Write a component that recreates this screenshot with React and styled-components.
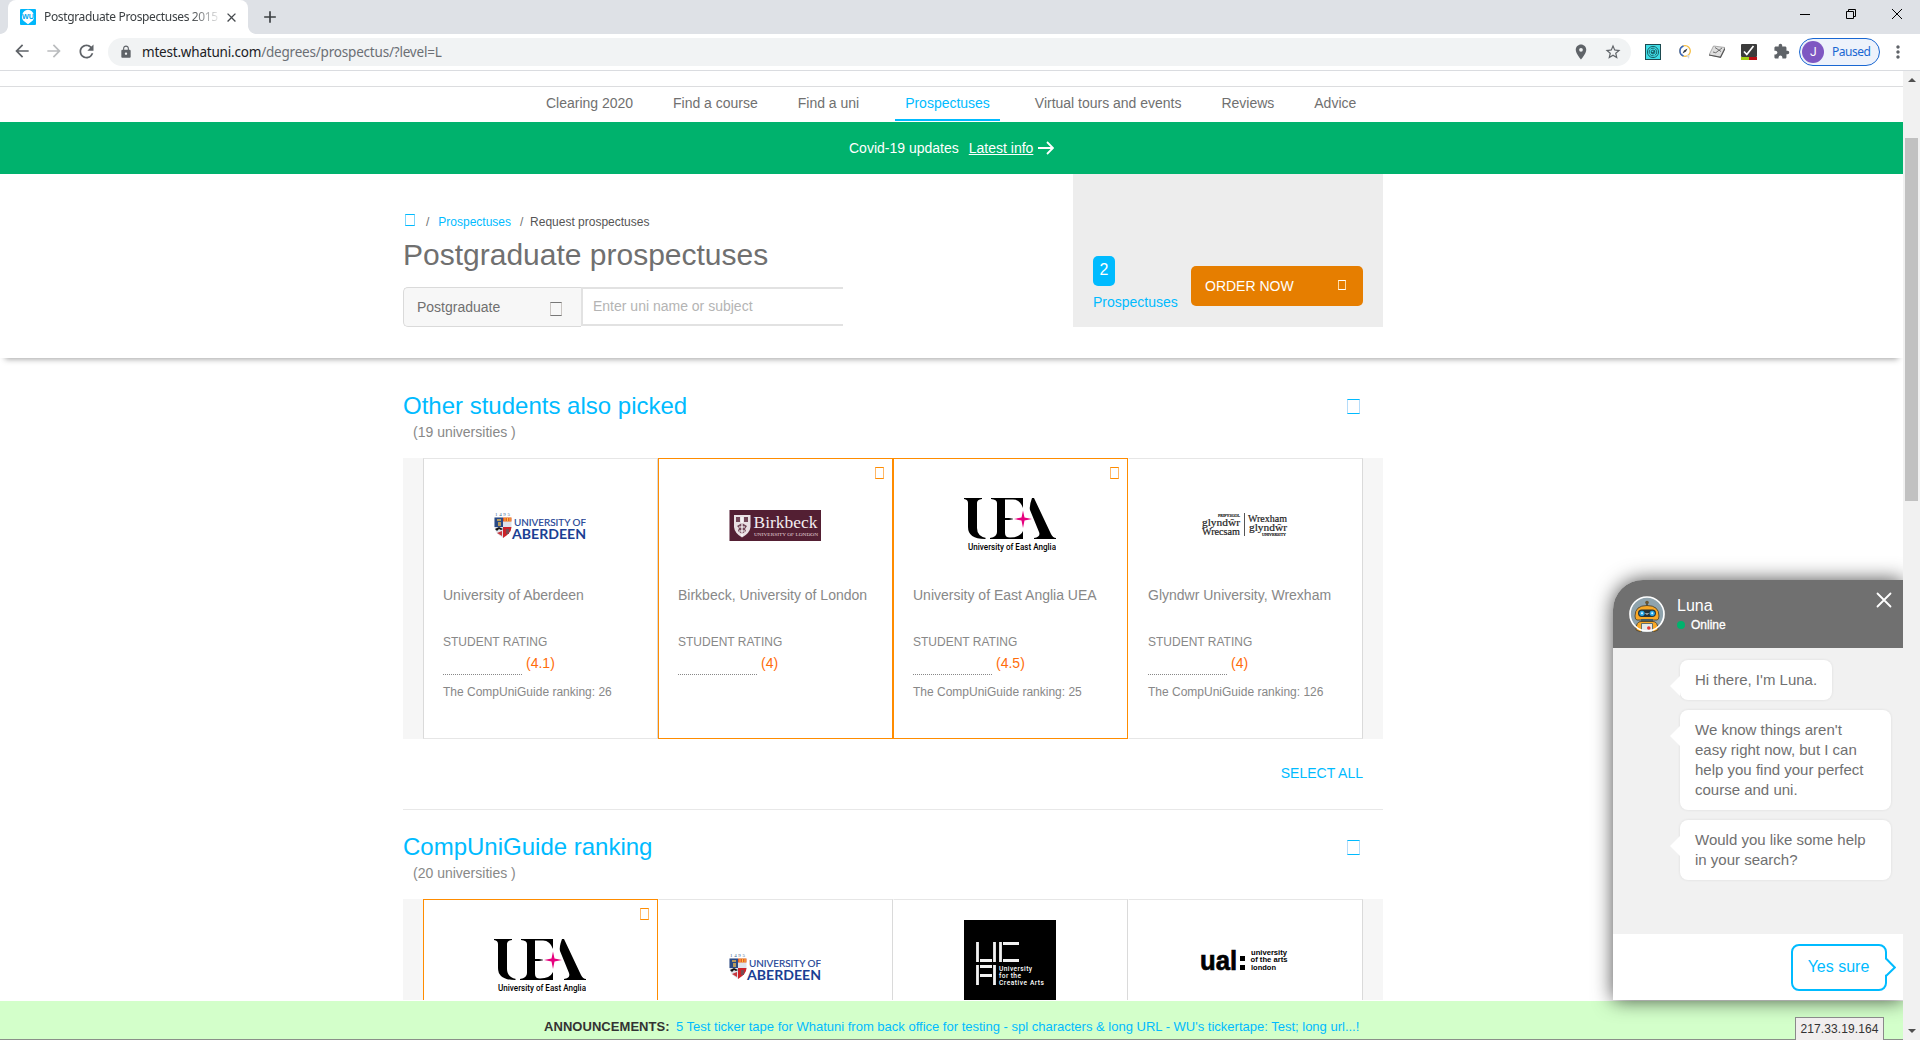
import React from "react";
import styled, { createGlobalStyle } from "styled-components";
import {
  MdArrowBack,
  MdArrowForward,
  MdRefresh,
  MdLock,
  MdPlace,
  MdStarBorder,
  MdExtension,
  MdMoreVert,
  MdClose,
  MdAdd,
} from "react-icons/md";

const blue = "#00bbff";
const orange = "#ff8c00";

const GlobalStyle = createGlobalStyle`
  * { box-sizing: border-box; }
  body {
    margin: 0;
    background: #fff;
    font-family: "Liberation Sans", Arial, sans-serif;
    font-size: 14px;
    line-height: 20px;
    color: #707070;
  }
  svg { display: block; flex: none; }
  h1, h2, p { margin: 0; font-weight: normal; }
`;

const Window = styled.div`
  width: 1920px;
  height: 1040px;
  display: flex;
  flex-direction: column;
  overflow: hidden;
`;

/* ---------- browser chrome ---------- */

const TabStrip = styled.div`
  height: 34px;
  flex: none;
  background: #dee1e6;
  display: flex;
  align-items: flex-start;
  justify-content: space-between;
`;

const TabGroup = styled.div`
  display: flex;
  align-items: flex-start;
`;

const TabCurve = styled.div`
  width: 8px;
  height: 8px;
  margin-top: 26px;
  background: radial-gradient(
    circle at ${(p) => (p.$side === "left" ? "0 0" : "100% 0")},
    #dee1e6 7.5px,
    #fff 8.2px
  );
`;

const Tab = styled.div`
  height: 34px;
  width: 240px;
  padding: 0 9px 0 12px;
  background: #fff;
  border-radius: 8px 8px 0 0;
  display: flex;
  align-items: center;
  color: #45494d;
`;

const TabTitle = styled.span`
  font-family: "Noto Sans", sans-serif;
  font-size: 12px;
  letter-spacing: -0.36px;
  line-height: 16px;
  width: 174px;
  margin: 0 6px 0 8px;
  white-space: nowrap;
  color: #3c4043;
  mask-image: linear-gradient(90deg, #000 146px, transparent 178px);
`;

const NewTab = styled.div`
  margin: 7px 0 0 4px;
  color: #3c4043;
`;

const WindowControls = styled.div`
  display: flex;
  gap: 36px;
  padding: 9px 18px 0 0;
`;

const Toolbar = styled.div`
  height: 37px;
  flex: none;
  background: #fff;
  border-bottom: 1px solid #dadce0;
  display: flex;
  align-items: center;
  padding: 0 12px 1px;
  color: #5f6368;
`;

const NavIcons = styled.div`
  display: flex;
  gap: 12px;
  width: 96px;
  color: #5f6368;
  svg:nth-child(2) { color: #babcbe; }
`;

const Omnibox = styled.div`
  width: 1523px;
  height: 28px;
  border-radius: 14px;
  background: #f1f3f4;
  display: flex;
  align-items: center;
  padding: 0 9px 0 11px;
`;

const Url = styled.span`
  font-family: "Noto Sans", sans-serif;
  font-size: 13.5px;
  letter-spacing: -0.2px;
  flex: 1;
  margin-left: 9px;
  color: #6b6f74;
  white-space: nowrap;
  b { font-weight: normal; color: #202124; }
`;

const OmniActions = styled.div`
  display: flex;
  gap: 14px;
`;

const Extensions = styled.div`
  display: flex;
  align-items: center;
  margin-left: 14px;
  gap: 16px;
`;

const ProfilePill = styled.div`
  margin-left: 9px;
  width: 81px;
  height: 28px;
  border: 1px solid #1967d2;
  border-radius: 14px;
  background: #edf2fb;
  color: #1967d2;
  display: flex;
  align-items: center;
  padding-left: 2px;
  font-family: "Noto Sans", sans-serif;
  font-size: 12px;
  letter-spacing: -0.5px;
`;

const Avatar = styled.span`
  width: 22px;
  height: 22px;
  border-radius: 50%;
  background: #7e57c2;
  color: #fff;
  text-align: center;
  line-height: 22px;
  margin-right: 8px;
  font-family: Roboto, sans-serif;
`;

const MenuDots = styled.div`
  margin-left: 8px;
`;

/* ---------- page frame ---------- */

const Body = styled.div`
  flex: 1;
  display: flex;
  min-height: 0;
`;

const Page = styled.div`
  flex: 1;
  position: relative;
  display: flex;
  flex-direction: column;
  overflow: hidden;
`;

const Scrollable = styled.div`
  height: 929px;
  flex: none;
  overflow: hidden;
`;

const Scrollbar = styled.div`
  width: 17px;
  background: #f1f1f1;
  display: flex;
  flex-direction: column;
  align-items: center;
  padding: 7px 0 7px;
`;

const ScrollArrow = styled.div`
  border: 4px solid transparent;
  border-top: ${(p) => (p.$down ? "4px solid #505050" : "0")};
  border-bottom: ${(p) => (p.$down ? "0" : "4px solid #505050")};
`;

const Thumb = styled.div`
  width: 13px;
  height: 363px;
  margin: 56px 0 auto;
  background: #c1c1c1;
`;

const MainNav = styled.nav`
  margin-top: 15px;
  height: 36px;
  border-top: 1px solid #dcdddf;
  display: flex;
  padding-left: 526px;
`;

const NavLink = styled.a`
  height: 34px;
  padding: 6px ${(p) => (p.$active ? 10 : 20)}px 0;
  margin: 0 ${(p) => (p.$active ? 15 : 0)}px 0 ${(p) => (p.$active ? 16 : 0)}px;
  border-bottom: 2px solid ${(p) => (p.$active ? blue : "transparent")};
  color: ${(p) => (p.$active ? blue : "#707070")};
  letter-spacing: -0.01px;
  white-space: nowrap;
`;

const Banner = styled.div`
  height: 52px;
  background: #00b26d;
  color: #fff;
  display: flex;
  align-items: center;
  padding-left: 849px;
  a { text-decoration: underline; margin: 0 5px 0 10px; }
`;

const Hero = styled.header`
  height: 184px;
  margin: 0 0 11px;
  box-shadow: 0 6px 6px -5px rgba(0, 0, 0, 0.38);
`;

const Container = styled.div`
  width: 980px;
  margin: 0 auto 0 403px;
  display: flex;
  justify-content: space-between;
`;

const HeroMain = styled.div`
  padding-top: 38px;
`;

const Crumbs = styled.div`
  display: flex;
  align-items: flex-start;
  font-size: 12px;
  color: #555;
  white-space: pre;
  i { font-style: normal; color: #707070; }
  a { color: ${blue}; margin: 0 -1px; }
`;

const Glyph = styled.span`
  display: block;
  flex: none;
  width: ${(p) => p.$w}px;
  height: ${(p) => p.$h}px;
  border: 1px solid ${(p) => p.$c};
  border-left-color: ${(p) => p.$side || p.$c};
  border-right-color: ${(p) => p.$side || p.$c};
  margin: ${(p) => p.$m || 0};
`;

const Title = styled.h1`
  margin: 5px 0 14px;
  font-size: 30px;
  line-height: 36px;
`;

const SearchBar = styled.div`
  display: flex;
  align-items: flex-start;
  width: 440px;
`;

const LevelSelect = styled.div`
  width: 178px;
  height: 40px;
  padding: 9px 19px 0 13px;
  display: flex;
  justify-content: space-between;
  background: #f7f7f7;
  border: 1px solid #dadada;
  border-right: 0;
  border-radius: 5px 0 0 5px;
`;

const SearchField = styled.div`
  flex: 1;
  height: 39px;
  padding: 7px 10px;
  border: 2px solid #e2e2e2;
  border-right: 0;
  color: #b4b4b4;
`;

const OrderPanel = styled.aside`
  width: 310px;
  height: 153px;
  padding: 82px 20px 0;
  background: #ededed;
  display: flex;
  justify-content: space-between;
  color: ${blue};
`;

const CountBadge = styled.div`
  width: 22px;
  height: 30px;
  margin-bottom: 6px;
  border-radius: 5px;
  background: ${blue};
  color: #fff;
  font-size: 16px;
  line-height: 28px;
  text-align: center;
`;

const OrderButton = styled.div`
  width: 172px;
  height: 40px;
  margin-top: 10px;
  padding: 10px 17px 0 14px;
  border-radius: 5px;
  background: #e67e00;
  color: #fff;
  display: flex;
  justify-content: space-between;
`;

/* ---------- university sections ---------- */

const Section = styled.section`
  width: 980px;
  margin-left: 403px;
  padding: 22px 0 26px;
  border-bottom: 1px solid #e8e8e8;
`;

const SectionHead = styled.div`
  display: flex;
  justify-content: space-between;
  height: 31px;
  h2 { color: ${blue}; font-size: 24px; line-height: 30px; }
`;

const SectionCount = styled.p`
  margin: 0 0 16px 10px;
  color: #888;
`;

const Carousel = styled.div`
  display: flex;
  padding: 0 20px;
  background: #f6f6f6;
`;

const Card = styled.article`
  position: relative;
  width: 235px;
  height: 281px;
  padding-left: 19px;
  background: #fff;
  border: 1px solid ${(p) => (p.$picked ? orange : "#e6e6e6")};
  border-left-color: ${(p) => (p.$picked ? orange : p.$first ? "#dadada" : "#fff")};
  border-right-color: ${(p) => (p.$picked ? orange : "#dadada")};
  color: #888;
`;

const PickMark = styled.div`
  position: absolute;
  top: 8px;
  right: 8px;
`;

const LogoArea = styled.div`
  height: 126px;
  padding: 7px 20px 0 0;
  display: flex;
  align-items: center;
  justify-content: center;
`;

const RatingLabel = styled.div`
  margin-top: 27px;
  font-size: 12px;
`;

const RatingRow = styled.div`
  display: flex;
  height: 22px;
  margin-top: 1px;
  gap: 4px;
  color: #ff6c0a;
`;

const Stars = styled.span`
  width: 79px;
  border-bottom: 1px dotted #888;
`;

const Ranking = styled.div`
  margin-top: 7px;
  font-size: 12px;
`;

const SelectAll = styled.div`
  margin: 24px 20px 0 0;
  text-align: right;
  color: ${blue};
`;

const Announcements = styled.footer`
  margin-top: 1px;
  height: 39px;
  padding: 16px 0 0 544px;
  background: #d3ffca;
  border-bottom: 1px solid #8a8f89;
  display: flex;
  white-space: nowrap;
  font-size: 13px;
  color: ${blue};
  b { width: 132px; color: #333; letter-spacing: 0.05px; }
`;

/* ---------- chat ---------- */

const Chat = styled.div`
  position: absolute;
  left: 1613px;
  top: 509px;
  width: 290px;
  height: 420px;
  display: flex;
  flex-direction: column;
  border-radius: 30px 0 0 0;
  background: #fff;
  box-shadow: 0 0 20px rgba(0, 0, 0, 0.7);
`;

const ChatHeader = styled.div`
  height: 68px;
  padding: 16px 11px 0 16px;
  border-radius: 30px 0 0 0;
  background: #707070;
  color: #fff;
  display: flex;
`;

const ChatName = styled.div`
  flex: 1;
  margin-left: 12px;
  font-size: 16px;
`;

const Status = styled.div`
  display: flex;
  align-items: center;
  gap: 6px;
  height: 16px;
  margin-top: 1px;
  font-size: 12px;
  -webkit-text-stroke: 0.3px #fff;
  &::before {
    content: "";
    width: 8px;
    height: 8px;
    border-radius: 50%;
    background: #00b26d;
  }
`;

const ChatClose = styled.div`
  margin-top: -4px;
`;

const Messages = styled.div`
  height: 286px;
  padding: 12px 12px 0 67px;
  background: #f1f1f1;
  display: flex;
  flex-direction: column;
  align-items: flex-start;
  gap: 10px;
`;

const Bubble = styled.div`
  position: relative;
  padding: 10px 15px;
  border-radius: 8px;
  background: #fff;
  font-size: 15px;
  white-space: pre;
  width: ${(p) => p.$w}px;
  box-shadow: 0 0 3px rgba(0, 0, 0, 0.09);
  &::before {
    content: "";
    position: absolute;
    left: -10px;
    top: 16px;
    border: 10px solid transparent;
    border-right-color: #fff;
    border-left: 0;
  }
`;

const ChatFooter = styled.div`
  height: 66px;
  padding: 10px 16px 0 0;
  display: flex;
  justify-content: flex-end;
`;

const Reply = styled.div`
  position: relative;
  width: 96px;
  height: 47px;
  padding-right: 1px;
  border: 2px solid ${blue};
  border-radius: 8px;
  color: ${blue};
  font-size: 16px;
  line-height: 42px;
  text-align: center;
  svg { position: absolute; right: -11px; top: 11px; }
`;

const IpBadge = styled.div`
  position: absolute;
  right: 19px;
  bottom: 0;
  width: 89px;
  height: 23px;
  border: 1px solid #8a8a8a;
  border-bottom: 0;
  background: #f1eeee;
  color: #333;
  font-size: 12px;
  line-height: 22px;
  text-align: center;
  letter-spacing: 0.1px;
`;

/* ---------- logos ---------- */

const SERIF = "Liberation Serif, serif";
const SANS = "Liberation Sans, sans-serif";

const Aberdeen = () => (
  <svg width="92" height="31" viewBox="0 0 92 31">
    <text x="1" y="6" fontSize="5" fill="#3d6390" fontFamily={SERIF} textLength="15">1495</text>
    <path d="M0.5 7.5H17.5V17Q17.500 23 9 28Q.5 23 .5 17Z" fill="#dfe2ea" />
    <path d="M.5 7.500H9V17H.5Z" fill="#2a4a85" />
    <path d="M3 9h4v2H3zM4 12h3v4H4z" fill="#b79b5e" />
    <path d="M9 7.500h8.500v4H9z" fill="#e8592c" />
    <path d="M11 7.500v4M13.500 7.500v4M16 7.500v4" stroke="#f9c43a" strokeWidth="1" />
    <path d="M9 17h8.500Q17.500 23 9 28Z" fill="#cc2229" />
    <path d="M12 19h3v5h-3z" fill="#7c4a50" />
    <path d="M1 19l4-2 4 2-2 1-2-1-2 2z" fill="#111" />
    <path d="M3 23l5-2v5z" fill="#c7383d" />
    <text x="20" y="16" fontSize="9" fill="#1b3f94" stroke="#1b3f94" strokeWidth=".15" fontFamily="Lato, sans-serif" textLength="72" lengthAdjust="spacingAndGlyphs">UNIVERSITY OF</text>
    <text x="18" y="29" fontSize="14" fill="#1b3f94" fontFamily="Lato, sans-serif" fontWeight="bold" textLength="74" lengthAdjust="spacingAndGlyphs">ABERDEEN</text>
  </svg>
);

const Birkbeck = () => (
  <svg width="92" height="31" viewBox="0 0 92 31">
    <rect width="92" height="31" fill="#531f33" />
    <path d="M0 0h1v31H0z" fill="#a68a96" />
    <path d="M5 5H21.500V17Q21 23 13 27.500Q5.500 23 5 17Z" fill="#e9e0e3" />
    <path d="M7 7h4v5H7zM15 7h4v5h-4zM8 16l5-3 5 3-2 3 1 2-4 3-4-3 1-3z" fill="#531f33" opacity=".8" />
    <path d="M13 7v19M10 17h6M10 21h6" stroke="#fff" strokeWidth="1.200" />
    <text x="24.500" y="17.500" fontSize="17" fill="#f4edf0" fontFamily={SERIF} textLength="64" lengthAdjust="spacingAndGlyphs">Birkbeck</text>
    <text x="25" y="26" fontSize="5" fill="#e3d5da" fontFamily={SERIF} textLength="64" lengthAdjust="spacingAndGlyphs">UNIVERSITY OF LONDON</text>
  </svg>
);

const Uea = () => (
  <svg width="92" height="55" viewBox="0 0 92 55">
    <path d="M0 0H18V1Q13 1.500 13 5V30Q13 38 22 40L21 41Q4 41 4 29V5Q4 1.500 0 1Z" />
    <path d="M27 0H59V10Q56 1.500 49 1.500H41V20H45L49 20.800V21.200L45 22H41V35Q41 39.500 46 39.500Q56 39.500 59 33V41H26V40Q33 39 33 34V5Q33 1.500 27 1Z" />
    <path d="M68 0H70L87 36Q89 40 92 40V41H70V40Q77 39 75 34L66 12Q65 8 68 0Z" />
    <path d="M59 12.500L60.500 19.500L68 21L60.500 22.500L59 30L57.500 22.500L50 21L57.500 19.500Z" fill="#e6007e" />
    <text x="4" y="52" fontSize="8.500" fontFamily="Roboto, sans-serif" fontWeight="500" textLength="88" lengthAdjust="spacingAndGlyphs">University of East Anglia</text>
  </svg>
);

const Glyndwr = () => (
  <svg width="92" height="29" viewBox="0 0 92 29">
    <g fill="#222" stroke="#222" strokeWidth=".2" fontFamily={SERIF}>
      <text x="19" y="6" fontSize="3.500" textLength="22" lengthAdjust="spacingAndGlyphs">PRIFYSGOL</text>
      <text x="3" y="14.500" fontSize="11" textLength="38" lengthAdjust="spacingAndGlyphs">glyndŵr</text>
      <text x="3" y="24" fontSize="10" textLength="38" lengthAdjust="spacingAndGlyphs">Wrecsam</text>
      <text x="49" y="10.500" fontSize="10" textLength="39" lengthAdjust="spacingAndGlyphs">Wrexham</text>
      <text x="50" y="19.500" fontSize="11" textLength="38" lengthAdjust="spacingAndGlyphs">glyndŵr</text>
      <text x="63" y="25" fontSize="3.500" textLength="24" lengthAdjust="spacingAndGlyphs">UNIVERSITY</text>
    </g>
    <path d="M45.500 2V25" stroke="#555" />
  </svg>
);

const Uca = () => (
  <svg width="92" height="93" viewBox="0 0 92 93">
    <rect width="92" height="93" />
    <path d="M13.500 22v20M16 40.500H28M30.500 22v20M36.500 22v20M39 23.500H55M39 40.500H55M13.500 45v20M30.500 45v20M16 46.500H28M16 55.500H28" stroke="#f2f2f2" strokeWidth="2.800" />
    <g fill="#fff" fontSize="6.600" fontFamily="Roboto, sans-serif" fontWeight="500">
      <text x="35" y="50.500" textLength="33">University</text>
      <text x="35" y="57.500" textLength="22">for the</text>
      <text x="35" y="64.500" textLength="45">Creative Arts</text>
    </g>
  </svg>
);

const Ual = () => (
  <svg width="92" height="48" viewBox="0 0 92 48">
    <g stroke="#000" strokeWidth=".7">
      <text x="1" y="27" fontSize="27" fontFamily={SANS} fontWeight="bold" textLength="37" lengthAdjust="spacingAndGlyphs">ual</text>
    </g>
    <path d="M41 13h5v5h-5zM41 22h5v5h-5z" />
    <g fontSize="7" fontFamily={SANS} fontWeight="bold">
      <text x="52" y="11.500" textLength="36" lengthAdjust="spacingAndGlyphs">university</text>
      <text x="51.500" y="19" textLength="37" lengthAdjust="spacingAndGlyphs">of the arts</text>
      <text x="52" y="26.500" textLength="25" lengthAdjust="spacingAndGlyphs">london</text>
    </g>
  </svg>
);

const Favicon = () => (
  <svg width="16" height="16" viewBox="0 0 16 16">
    <rect width="16" height="16" rx="1" fill="#00b7fb" />
    <path d="M8 .8a6.600 6.600 0 0 1 3.200 12L8 15.200l-3.200-2.400A6.600 6.600 0 0 1 8 .8z" fill="#fff" />
    <text x="2" y="10" fontSize="7" fontWeight="bold" fill="#00a8f0" fontFamily={SANS} textLength="12" lengthAdjust="spacingAndGlyphs">WU</text>
  </svg>
);

const Robot = () => (
  <svg width="36" height="36" viewBox="0 0 36 36">
    <circle cx="18" cy="18" r="17" fill="#8fa3ad" />
    <path d="M18 5v6" stroke="#37474f" strokeWidth="1.500" />
    <circle cx="18" cy="6.500" r="1.800" fill="#6b5733" />
    <path d="M8 24Q6 24 6 20Q6 9.500 18 9.500Q30 9.500 30 20Q30 24 28 24Z" fill="#f9a825" stroke="#4e4532" strokeWidth=".9" />
    <path d="M12 23h12v3H12z" fill="#455a64" />
    <path d="M7 34Q7 25.500 12 25.500H24Q29 25.500 29 34L24 36H12Z" fill="#f9a825" stroke="#4e4532" strokeWidth=".9" />
    <path d="M12.500 27.500h11V36h-11z" fill="#e4e9eb" stroke="#455a64" strokeWidth=".8" />
    <rect x="9" y="13.500" width="18" height="7.500" rx="3.700" fill="#263238" />
    <circle cx="13" cy="17.300" r="2.600" fill="#29a9e8" />
    <circle cx="23.200" cy="17.300" r="2.600" fill="#29a9e8" />
    <circle cx="13" cy="17.300" r="1" fill="#e6f7ff" />
    <circle cx="23.200" cy="17.300" r="1" fill="#e6f7ff" />
    <path d="M16.500 17.500q1.500 1.300 3 0" stroke="#eee" fill="none" />
    <circle cx="19.800" cy="32" r="1.800" fill="#e53935" />
    <circle cx="18" cy="18" r="17" fill="none" stroke="#fff" strokeWidth="1.700" />
  </svg>
);

const TealExt = () => (
  <svg width="16" height="16" viewBox="0 0 16 16">
    <rect x=".5" y=".5" width="15" height="15" fill="#3fdde6" stroke="#1d4a50" />
    <g fill="none" stroke="#16585f" strokeWidth=".9">
      <circle cx="8" cy="8" r="5.600" />
      <circle cx="8" cy="8" r="3.800" strokeDasharray="4 1" />
      <circle cx="8" cy="8" r="1.900" />
    </g>
    <path d="M6.500 8l1.200 1.200 2-2.600" fill="none" stroke="#063a40" />
  </svg>
);

const CompassExt = () => (
  <svg width="16" height="16" viewBox="0 0 16 16">
    <circle cx="8" cy="7" r="5.300" fill="#fff" stroke="#f6bd3e" strokeWidth="1.300" />
    <path d="M6.500 2a5.300 5.300 0 0 0 0 10" fill="none" stroke="#3367c8" strokeWidth="1.500" />
    <path d="M5.500 9.500l1.500-3L10.500 4.500l-1.500 3z" fill="#30363c" />
    <path d="M9 11l3 4 .5-4z" fill="#d5d8db" />
  </svg>
);

const TabletExt = () => (
  <svg width="16" height="16" viewBox="0 0 16 16">
    <path d="M4.500 2L16 3.500L11.500 13L0 11Z" fill="#dedede" stroke="#9b9b9b" strokeWidth=".8" />
    <path d="M0 11L11.500 13.300L16 4.500" fill="none" stroke="#555" strokeWidth="1.200" />
    <path d="M6 3.500l6 4M4 8q3 2 5-1l4-3" fill="none" stroke="#555" strokeWidth=".8" />
  </svg>
);

const CheckExt = () => (
  <svg width="16" height="16" viewBox="0 0 16 16">
    <rect width="16" height="13" rx="1" fill="#3b3b3b" />
    <path d="M0 13h8v3H0z" fill="#a4cf14" />
    <path d="M8 13h8v3H8z" fill="#b90e14" />
    <path d="M3 7.500l2.800 3L12.500 2" stroke="#fff" strokeWidth="1.700" fill="none" />
  </svg>
);

/* ---------- data ---------- */

const navItems = [
  "Clearing 2020",
  "Find a course",
  "Find a uni",
  "Prospectuses",
  "Virtual tours and events",
  "Reviews",
  "Advice",
];

const alsoPicked = [
  { name: "University of Aberdeen", rating: "4.1", rank: 26, logo: Aberdeen },
  { name: "Birkbeck, University of London", rating: "4", logo: Birkbeck, picked: true },
  { name: "University of East Anglia UEA", rating: "4.5", rank: 25, logo: Uea, picked: true },
  { name: "Glyndwr University, Wrexham", rating: "4", rank: 126, logo: Glyndwr },
];

const byRanking = [
  { logo: Uea, picked: true },
  { logo: Aberdeen },
  { logo: Uca },
  { logo: Ual },
];

function UniCard({ uni, first }) {
  const Logo = uni.logo;
  return (
    <Card $picked={uni.picked} $first={first}>
      {uni.picked && (
        <PickMark>
          <Glyph $w={9} $h={12} $c={orange} $side="#ffb766" />
        </PickMark>
      )}
      <LogoArea>
        <Logo />
      </LogoArea>
      {uni.name && (
        <>
          <div>{uni.name}</div>
          <RatingLabel>STUDENT RATING</RatingLabel>
          <RatingRow>
            <Stars />
            <span>({uni.rating})</span>
          </RatingRow>
          {uni.rank && <Ranking>The CompUniGuide ranking: {uni.rank}</Ranking>}
        </>
      )}
    </Card>
  );
}

function UniSection({ title, count, unis, selectable }) {
  return (
    <Section>
      <SectionHead>
        <h2>{title}</h2>
        <Glyph $w={13} $h={15} $c={blue} $side="#b5dcfa" $m="8px 23px 0 0" />
      </SectionHead>
      <SectionCount>({count} universities )</SectionCount>
      <Carousel>
        {unis.map((uni, i) => (
          <UniCard key={i} uni={uni} first={i === 0} />
        ))}
      </Carousel>
      {selectable && <SelectAll>SELECT ALL</SelectAll>}
    </Section>
  );
}

export default function App() {
  return (
    <Window>
      <GlobalStyle />
      <TabStrip>
        <TabGroup>
          <TabCurve $side="left" />
          <Tab>
            <Favicon />
            <TabTitle>Postgraduate Prospectuses 2015</TabTitle>
            <MdClose size={15} />
          </Tab>
          <TabCurve $side="right" />
          <NewTab>
            <MdAdd size={20} />
          </NewTab>
        </TabGroup>
        <WindowControls>
          <svg width="10" height="10" viewBox="0 0 10 10">
            <path d="M0 5.500h10" stroke="#000" />
          </svg>
          <svg width="10" height="10" viewBox="0 0 10 10">
            <path d="M.5 2.500h7v7h-7zM2.500 2.500v-2h7v7h-2" fill="none" stroke="#000" />
          </svg>
          <svg width="10" height="10" viewBox="0 0 10 10">
            <path d="M0 0l10 10M10 0L0 10" stroke="#000" />
          </svg>
        </WindowControls>
      </TabStrip>
      <Toolbar>
        <NavIcons>
          <MdArrowBack size={20} />
          <MdArrowForward size={20} />
          <MdRefresh size={21} />
        </NavIcons>
        <Omnibox>
          <MdLock size={14} />
          <Url>
            <b>mtest.whatuni.com</b>/degrees/prospectus/?level=L
          </Url>
          <OmniActions>
            <MdPlace size={18} />
            <MdStarBorder size={18} />
          </OmniActions>
        </Omnibox>
        <Extensions>
          <TealExt />
          <CompassExt />
          <TabletExt />
          <CheckExt />
          <MdExtension size={17} />
        </Extensions>
        <ProfilePill>
          <Avatar>J</Avatar>Paused
        </ProfilePill>
        <MenuDots>
          <MdMoreVert size={20} />
        </MenuDots>
      </Toolbar>
      <Body>
        <Page>
          <Scrollable>
            <MainNav>
              {navItems.map((item) => (
                <NavLink key={item} $active={item === "Prospectuses"}>
                  {item}
                </NavLink>
              ))}
            </MainNav>
            <Banner>
              Covid-19 updates <a>Latest info</a>
              <svg width="16" height="14" viewBox="0 0 16 14">
                <path d="M0 7h15M9 1l6 6-6 6" fill="none" stroke="#fff" strokeWidth="1.800" />
              </svg>
            </Banner>
            <Hero>
              <Container>
                <HeroMain>
                  <Crumbs>
                    <Glyph $w={10} $h={12} $c={blue} $side="#7fd6fb" $m="2px 11px 0 2px" />
                    <i>{"/   "}</i>
                    <a>Prospectuses</a>
                    <i>{"   /  "}</i>
                    <span>Request prospectuses</span>
                  </Crumbs>
                  <Title>Postgraduate prospectuses</Title>
                  <SearchBar>
                    <LevelSelect>
                      Postgraduate
                      <Glyph $w={12} $h={14} $c="#777" $side="#c9c5c2" $m="5px 0 0" />
                    </LevelSelect>
                    <SearchField>Enter uni name or subject</SearchField>
                  </SearchBar>
                </HeroMain>
                <OrderPanel>
                  <div>
                    <CountBadge>2</CountBadge>
                    Prospectuses
                  </div>
                  <OrderButton>
                    ORDER NOW
                    <Glyph $w={8} $h={10} $c="#fff" $side="#ffd9a0" $m="4px 0 0" />
                  </OrderButton>
                </OrderPanel>
              </Container>
            </Hero>
            <UniSection
              title="Other students also picked"
              count={19}
              unis={alsoPicked}
              selectable
            />
            <UniSection title="CompUniGuide ranking" count={20} unis={byRanking} />
          </Scrollable>
          <Announcements>
            <b>ANNOUNCEMENTS:</b>
            <span>
              5 Test ticker tape for Whatuni from back office for testing - spl characters &amp; long
              URL - WU's tickertape: Test; long url...!
            </span>
          </Announcements>
          <Chat>
            <ChatHeader>
              <Robot />
              <ChatName>
                Luna
                <Status>Online</Status>
              </ChatName>
              <ChatClose>
                <svg width="16" height="16" viewBox="0 0 16 16">
                  <path d="M1.500 1.500l13 13M14.500 1.500l-13 13" stroke="#fff" strokeWidth="1.800" strokeLinecap="round" />
                </svg>
              </ChatClose>
            </ChatHeader>
            <Messages>
              <Bubble $w={152}>Hi there, I'm Luna.</Bubble>
              <Bubble $w={211}>
                {"We know things aren't\neasy right now, but I can\nhelp you find your perfect\ncourse and uni."}
              </Bubble>
              <Bubble $w={211}>{"Would you like some help\nin your search?"}</Bubble>
            </Messages>
            <ChatFooter>
              <Reply>
                Yes sure
                <svg width="11" height="20" viewBox="0 0 11 20">
                  <path d="M0 2.200H2V17.800H0Z" fill="#fff" />
                  <path d="M1 1.500L9.800 10.500L1 19" fill="#fff" stroke={blue} strokeWidth="2" />
                </svg>
              </Reply>
            </ChatFooter>
          </Chat>
          <IpBadge>217.33.19.164</IpBadge>
        </Page>
        <Scrollbar>
          <ScrollArrow />
          <Thumb />
          <ScrollArrow $down />
        </Scrollbar>
      </Body>
    </Window>
  );
}
